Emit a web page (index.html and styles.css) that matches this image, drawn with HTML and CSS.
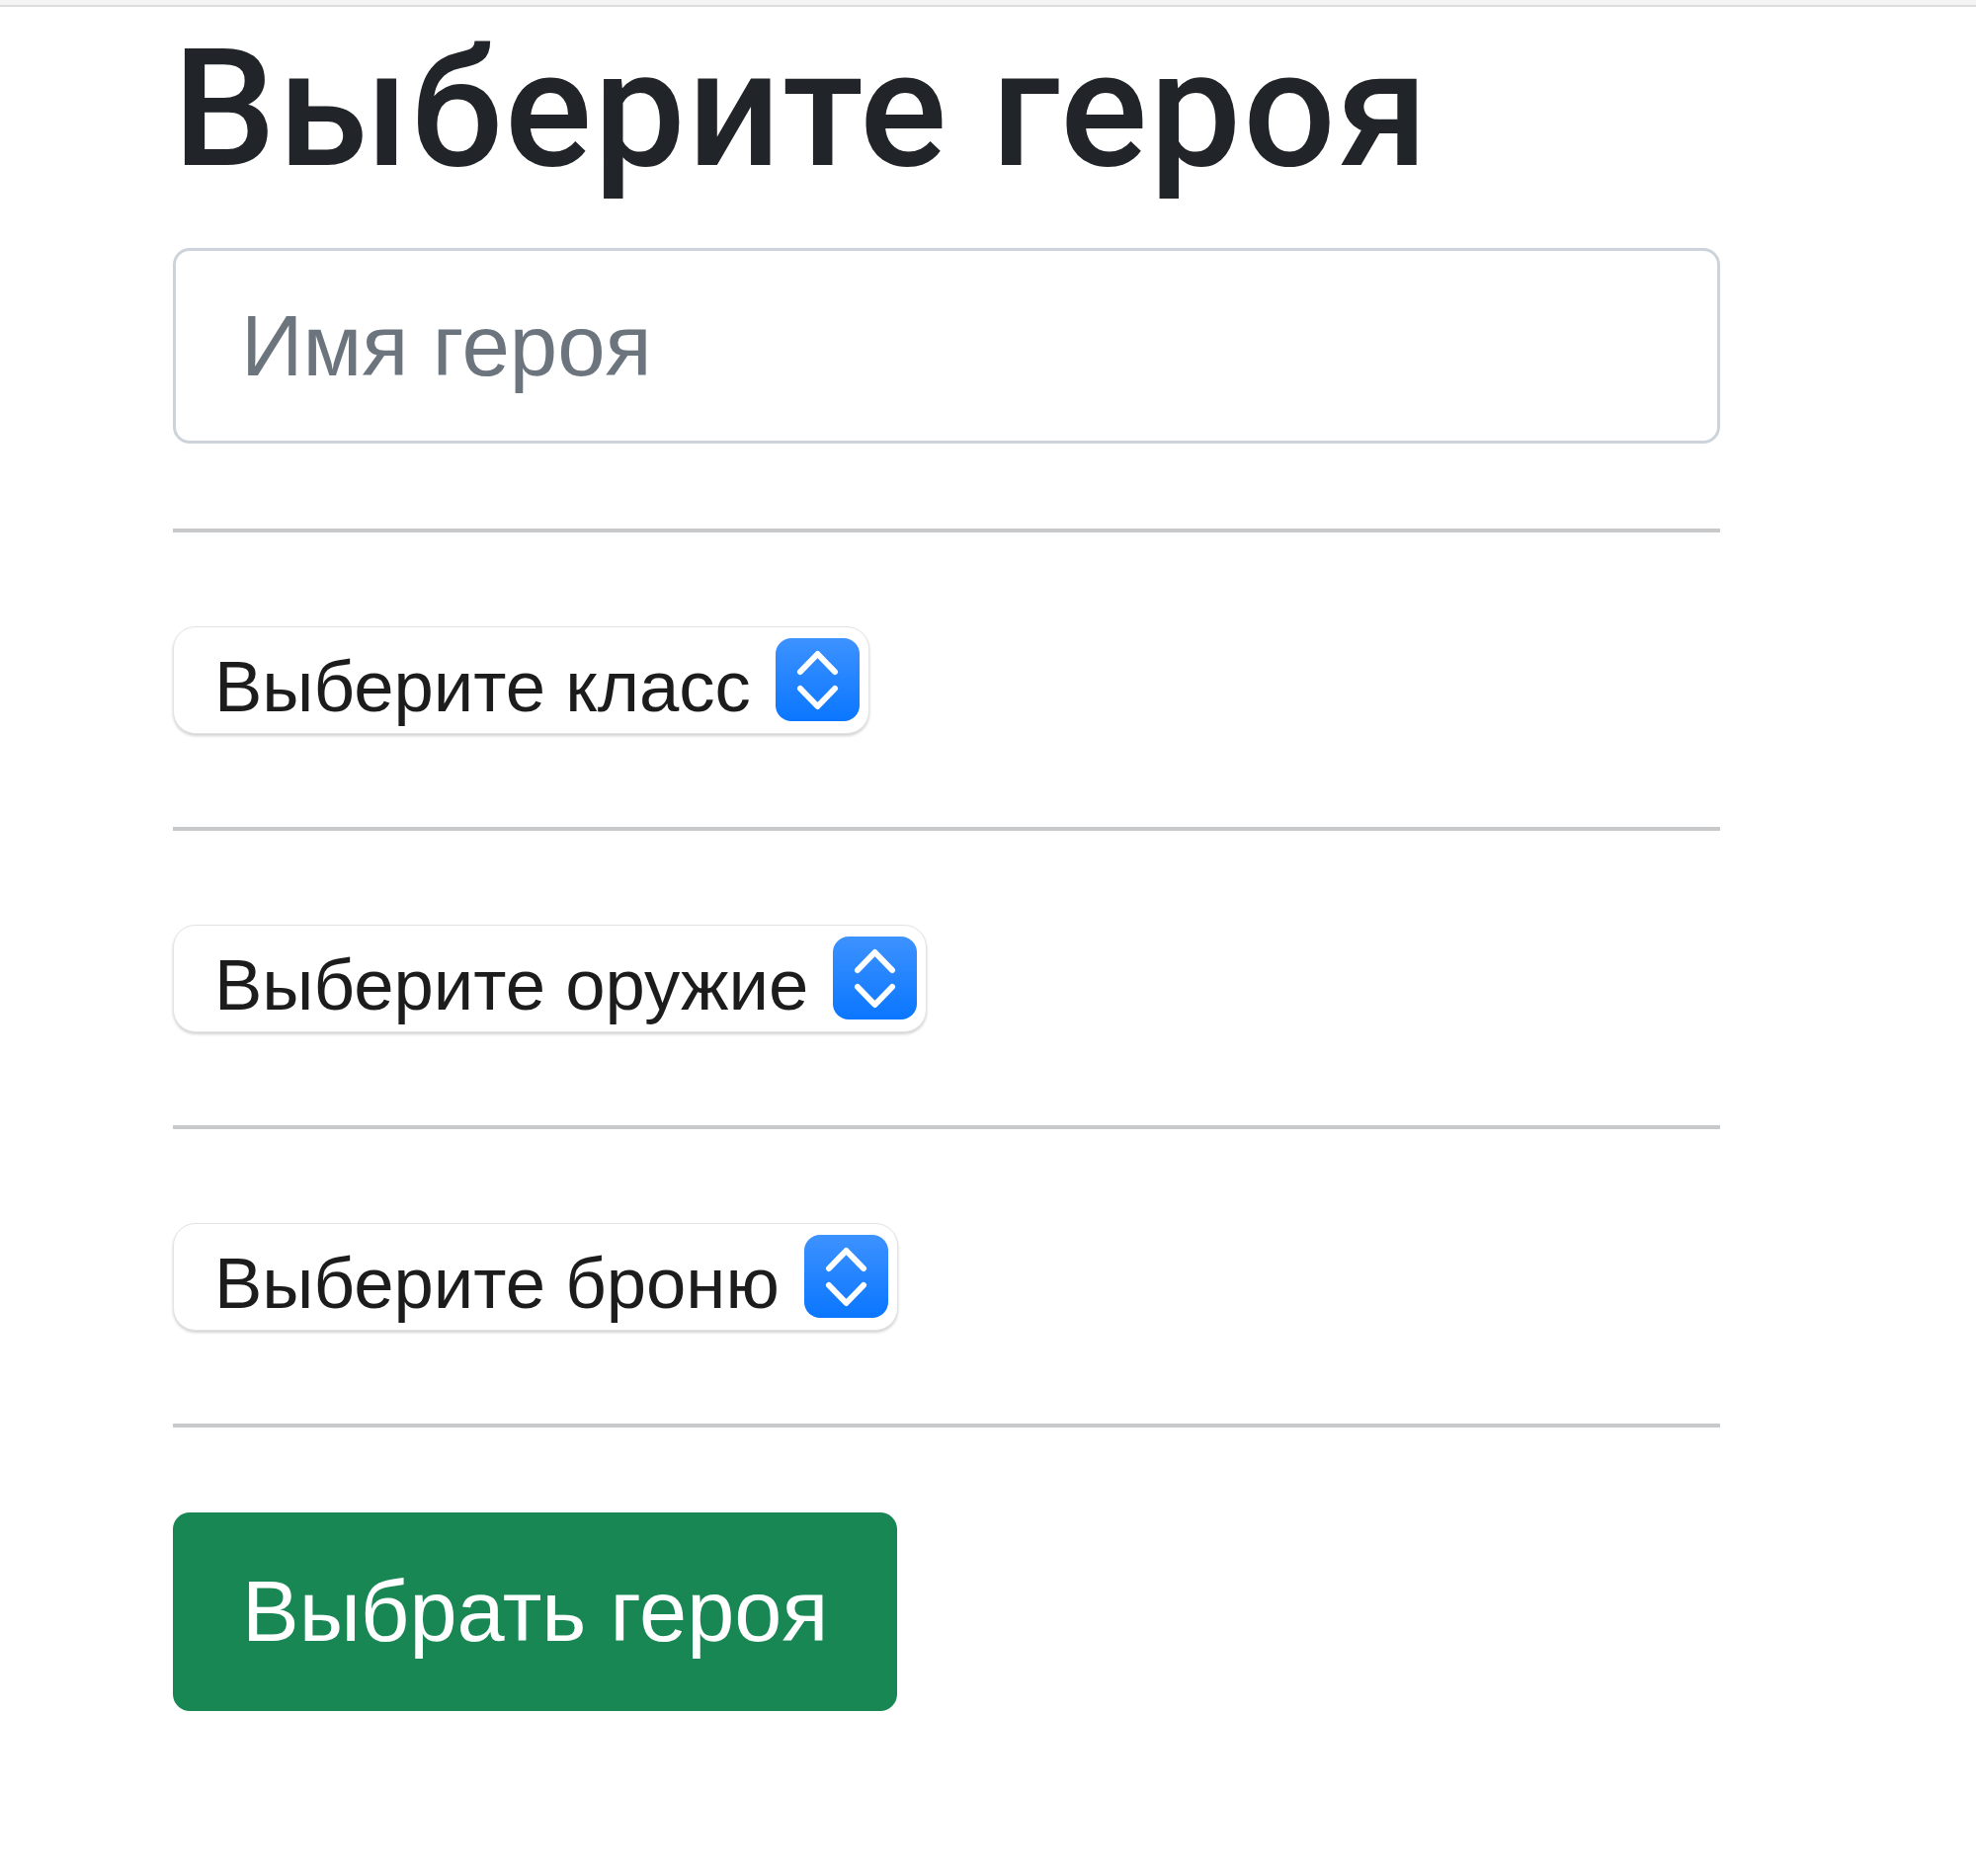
FILE: index.html
```html
<!DOCTYPE html>
<html lang="ru">
<head>
<meta charset="utf-8">
<title>Выберите героя</title>
<link rel="stylesheet" href="styles.css">
</head>
<body>
<div class="topbar"></div>
<main class="page">
  <h1 class="title">Выберите героя</h1>
  <input class="name-input" type="text" placeholder="Имя героя">
  <hr class="divider">
  <div class="field">
    <div class="select"><span class="select-label">Выберите класс</span>
      <svg class="stepper" width="85" height="84" viewBox="0 0 85 84"><defs><linearGradient id="g1" x1="0" y1="0" x2="0" y2="1"><stop offset="0" stop-color="#3d92ff"/><stop offset="1" stop-color="#0a76ff"/></linearGradient></defs><rect width="85" height="84" rx="16" fill="url(#g1)"/><polyline points="25,34 42.5,16 60,34" fill="none" stroke="#fff" stroke-width="6" stroke-linecap="round" stroke-linejoin="round"/><polyline points="25,51 42.5,69 60,51" fill="none" stroke="#fff" stroke-width="6" stroke-linecap="round" stroke-linejoin="round"/></svg>
    </div>
  </div>
  <hr class="divider">
  <div class="field">
    <div class="select"><span class="select-label">Выберите оружие</span>
      <svg class="stepper" width="85" height="84" viewBox="0 0 85 84"><defs><linearGradient id="g2" x1="0" y1="0" x2="0" y2="1"><stop offset="0" stop-color="#3d92ff"/><stop offset="1" stop-color="#0a76ff"/></linearGradient></defs><rect width="85" height="84" rx="16" fill="url(#g2)"/><polyline points="25,34 42.5,16 60,34" fill="none" stroke="#fff" stroke-width="6" stroke-linecap="round" stroke-linejoin="round"/><polyline points="25,51 42.5,69 60,51" fill="none" stroke="#fff" stroke-width="6" stroke-linecap="round" stroke-linejoin="round"/></svg>
    </div>
  </div>
  <hr class="divider">
  <div class="field">
    <div class="select"><span class="select-label">Выберите броню</span>
      <svg class="stepper" width="85" height="84" viewBox="0 0 85 84"><defs><linearGradient id="g3" x1="0" y1="0" x2="0" y2="1"><stop offset="0" stop-color="#3d92ff"/><stop offset="1" stop-color="#0a76ff"/></linearGradient></defs><rect width="85" height="84" rx="16" fill="url(#g3)"/><polyline points="25,34 42.5,16 60,34" fill="none" stroke="#fff" stroke-width="6" stroke-linecap="round" stroke-linejoin="round"/><polyline points="25,51 42.5,69 60,51" fill="none" stroke="#fff" stroke-width="6" stroke-linecap="round" stroke-linejoin="round"/></svg>
    </div>
  </div>
  <hr class="divider">
  <button class="submit" type="button">Выбрать героя</button>
</main>
</body>
</html>
```

FILE: styles.css
```css
html, body {
  margin: 0;
  padding: 0;
  background: #ffffff;
}

body {
  font-family: "Liberation Sans", Arial, sans-serif;
  color: #212529;
}

.topbar {
  height: 5px;
  background: #f4f4f4;
  border-bottom: 2px solid #dcdcdc;
}

.page {
  padding-left: 175px;
  width: 1566px;
  display: flex;
  flex-direction: column;
  align-items: flex-start;
}

.title {
  margin: 21px 0 0 0;
  font-family: Roboto, "Liberation Sans", sans-serif;
  font-weight: 500;
  font-size: 165px;
  line-height: 165px;
  letter-spacing: 2px;
  color: #212529;
  white-space: nowrap;
}

.name-input {
  margin-top: 58px;
  box-sizing: border-box;
  width: 1566px;
  height: 198px;
  border: 3px solid #ccd3da;
  border-radius: 17px;
  padding: 0 0 0 66px;
  font-family: "Liberation Sans", Arial, sans-serif;
  font-size: 87px;
  color: #212529;
  background: #fff;
  outline: none;
}

.name-input::placeholder {
  color: #6c757d;
  opacity: 1;
}

.divider {
  align-self: stretch;
  margin: 86px 0 0 0;
  height: 4px;
  border: 0;
  background: #c8c9ca;
}

.field {
  margin: 94.5px 0;
}

.field + .divider {
  margin-top: 0;
}

.select {
  box-sizing: border-box;
  height: 109px;
  display: inline-flex;
  align-items: center;
  padding: 0 9px 0 41px;
  gap: 25px;
  border: 1px solid #e3e3e3;
  border-radius: 23px;
  background: #fff;
  box-shadow: 0 2px 3px rgba(0, 0, 0, 0.18);
}

.select-label {
  font-size: 72.5px;
  line-height: 72px;
  padding-top: 13px;
  color: #1c1c1c;
  white-space: nowrap;
}

.stepper {
  display: block;
  flex: none;
}

.submit {
  margin-top: 86px;
  height: 201px;
  padding: 0 70px;
  border: 0;
  border-radius: 17px;
  background: #198754;
  color: #ffffff;
  font-family: "Liberation Sans", Arial, sans-serif;
  font-size: 86.5px;
  line-height: 1;
  cursor: pointer;
}
```
